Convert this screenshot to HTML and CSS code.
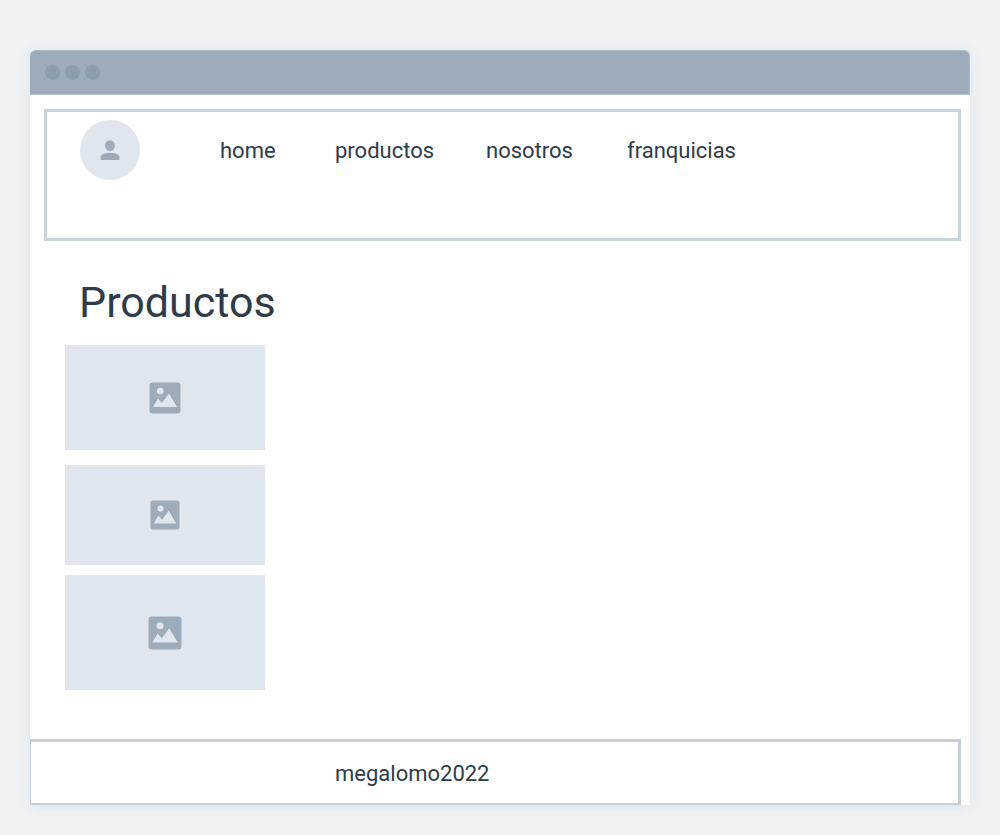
FILE: index.html
```
<!DOCTYPE html>
<html lang="es">
<head>
<meta charset="utf-8">
<meta name="viewport" content="width=device-width, initial-scale=1">
<title>Productos</title>
<link rel="stylesheet" href="styles.css">
</head>
<body class="page">
<svg class="defs" aria-hidden="true">
  <symbol id="picture" viewBox="0 0 32 32">
    <path fill="currentColor" fill-rule="evenodd" d="M3.500 0.500H28.500Q31.500 0.500 31.500 3.500V28.500Q31.500 31.500 28.500 31.500H3.500Q0.500 31.500 0.500 28.500V3.500Q0.500 0.500 3.500 0.500ZM11.300 5.800A3.300 3.300 0 1 0 11.300 12.400A3.300 3.300 0 1 0 11.300 5.800ZM4 25H28L20 11.500L13 21L9 16.500Z"/>
  </symbol>
</svg>
<div class="window">
  <div class="titlebar"><span class="dot"></span><span class="dot"></span><span class="dot"></span></div>
  <header class="header">
    <div class="avatar">
      <svg width="20" height="20" viewBox="0 0 20 20" aria-hidden="true"><ellipse cx="10" cy="5.700" rx="4.900" ry="5.500"/><path d="M.6 20V17.500C.6 14.300 4 13 10 13S19.400 14.300 19.400 17.500V20Z"/></svg>
    </div>
    <nav class="nav">
      <a href="#">home</a>
      <a href="#">productos</a>
      <a href="#">nosotros</a>
      <a href="#">franquicias</a>
    </nav>
  </header>
  <main class="main">
    <h1 class="title">Productos</h1>
    <div class="products">
      <div class="product"><svg class="icon" width="32" height="32" aria-hidden="true"><use href="#picture"/></svg></div>
      <div class="product short"><svg class="icon" width="30" height="30" aria-hidden="true"><use href="#picture"/></svg></div>
      <div class="product tall"><svg class="icon" width="34" height="34" aria-hidden="true"><use href="#picture"/></svg></div>
    </div>
  </main>
  <footer class="footer">megalomo2022</footer>
</div>
</body>
</html>
```
FILE: styles.css
```
* { box-sizing: border-box; }
.page {
  margin: 0;
  padding: 50px 30px 30px;
  background: #eff3f6;
  color: #2c3c4a;
  font: 22px/30px Roboto, "Liberation Sans", sans-serif;
}
.defs { display: none; }
.window {
  background: #fff;
  border-radius: 6px 6px 0 0;
  box-shadow: 0 2px 14px rgba(60, 80, 100, 0.09);
}
.titlebar {
  display: flex;
  align-items: center;
  gap: 5px;
  height: 45px;
  padding: 0 15px;
  background: #9dacb8;
  border: 1px solid #b1bfcb;
  border-radius: 6px 6px 0 0;
  border-left-width: 0;
}
.dot {
  width: 15px;
  height: 15px;
  border-radius: 50%;
  background: #8e9dab;
}
.header {
  display: flex;
  align-items: flex-start;
  min-height: 132px;
  margin: 14px 9px 0 14px;
  padding: 8px 33px;
  border: 3px solid #c8d3dd;
}
.avatar {
  display: flex;
  align-items: center;
  justify-content: center;
  flex: none;
  width: 60px;
  height: 60px;
  border-radius: 50%;
  background: #dfe6ee;
  fill: #9dacb8;
}
.nav {
  display: grid;
  grid-template-columns: 115px 151px 141px auto;
  margin: 16px 0 0 80px;
}
.nav a {
  color: inherit;
  text-decoration: none;
}
.main { padding: 34px 35px 49px; }
.title {
  margin: 0 0 16px 14px;
  font-size: 43px;
  line-height: 54px;
  font-weight: 400;
}
.products {
  display: flex;
  flex-direction: column;
  gap: 10px;
  width: 200px;
}
.product {
  display: flex;
  align-items: center;
  justify-content: center;
  height: 105px;
  background: #dfe6ee;
  color: #9dacb8;
}
.short {
  height: 100px;
  margin-top: 5px;
}
.tall { height: 115px; }
.footer {
  margin-right: 9px;
  padding: 17px 304px 14px;
  border: solid #c3d0dc;
  border-width: 3px 3px 2px 1px;
}
```
